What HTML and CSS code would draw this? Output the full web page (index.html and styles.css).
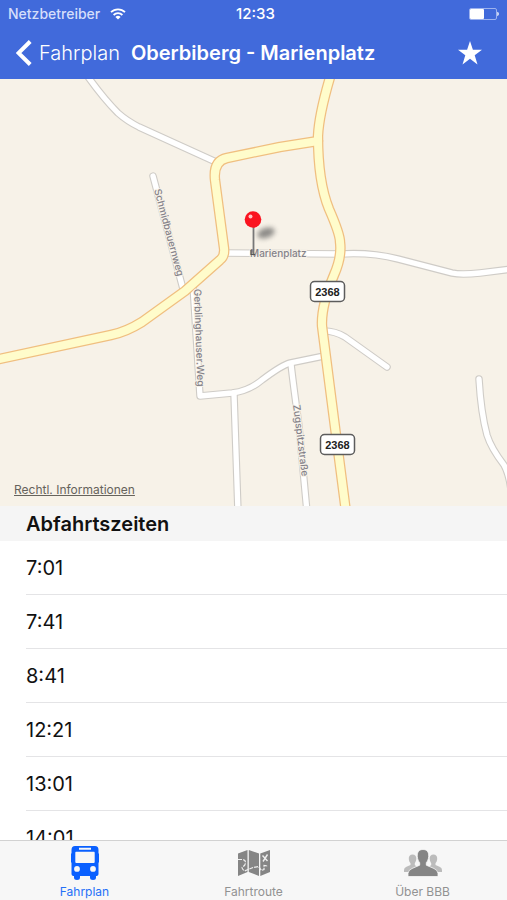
FILE: index.html
```html
<!DOCTYPE html>
<html lang="de">
<head>
<meta charset="utf-8">
<meta name="viewport" content="width=device-width, initial-scale=1">
<title>Oberbiberg - Marienplatz</title>
<link rel="stylesheet" href="styles.css">
</head>
<body>
<header class="header">
  <div class="status">
    <div class="carrier">
      <span>Netzbetreiber</span>
      <svg class="wifi" viewBox="0 0 16 12" aria-hidden="true">
        <g fill="none" stroke="#fff" stroke-width="1.8">
          <path d="M1 4.2a10 10 0 0 1 14 0"/>
          <path d="M3.6 7a6.3 6.3 0 0 1 8.8 0"/>
        </g>
        <path d="M8 11.6L5.4 9a3.7 3.7 0 0 1 5.2 0z" fill="#fff"/>
      </svg>
    </div>
    <span class="clock">12:33</span>
    <svg class="battery" viewBox="0 0 30 14" aria-hidden="true">
      <rect x=".5" y="1.5" width="27" height="11" rx="1.5" fill="none" stroke="#9db2ee"/>
      <rect x="1" y="2" width="14" height="10" rx="1" fill="#fff"/>
      <path d="M28.3 4.8q1.5.6 1.5 2.2t-1.5 2.2z" fill="#fff"/>
    </svg>
  </div>
  <nav class="navbar">
    <a class="back" href="#fahrplan">
      <svg class="chevron" viewBox="0 0 16 26" aria-hidden="true"><path d="M14.2 1.5L2.5 13l11.700 11.500" fill="none" stroke="#fff" stroke-width="4"/></svg>
      <span>Fahrplan</span>
    </a>
    <h1 class="title">Oberbiberg - Marienplatz</h1>
    <button class="favorite" type="button" aria-label="Favorit">
      <svg class="star" viewBox="0 0 24 24" aria-hidden="true"><path d="M12 0l2.900 8.700H24l-7.300 5.500 2.800 9.300L12 17.800l-7.500 5.700 2.800-9.300L0 8.700h9.100z" fill="#fff"/></svg>
    </button>
  </nav>
</header>

<main class="content">
  <section class="map" aria-label="Karte">
    <svg class="map-canvas" viewBox="0 79 507 427" preserveAspectRatio="xMidYMid slice">
      <defs>
        <filter id="soft" x="-50%" y="-50%" width="200%" height="200%"><feGaussianBlur stdDeviation="2.500"/></filter>
        <g id="lanes">
          <path d="M86 74Q103 98 118 113Q127 121 139 127Q176 144 216 162"/>
          <path d="M153 176L183 289"/>
          <path d="M193 285L200 396L232 393Q249 391 262 380Q282 365 290 363L324 356"/>
          <path d="M234 394L238 512"/>
          <path d="M291 364Q293 382 299 426L307 512"/>
          <path d="M225 253L340 254Q371 252 398 259L452 273Q461 275 480 273L512 269"/>
          <path d="M324 331Q335 331 345 337L387 367"/>
          <path d="M479 379Q481 413 487 435Q491 448 504 465Q509 474 511 490"/>
        </g>
        <g id="roads">
          <path d="M-5 360L111 335Q126 332 142 322L185 291L220 260Q225 256 224 248L215 180Q213 161 227 158L280 147L318 141"/>
          <path d="M331 74Q319 114 318 136Q318 182 329 209Q340 234 340 242Q342 257 334 275Q321 306 322 326L332 404L346 512"/>
        </g>
      </defs>
      <rect y="79" width="507" height="427" fill="#f7f2e8"/>
      <g fill="none" stroke-linecap="round" stroke-linejoin="round">
        <use href="#lanes" stroke="#cfccc7" stroke-width="7.500"/>
        <use href="#lanes" stroke="#fff" stroke-width="5.300"/>
        <use href="#roads" stroke="#f0bf80" stroke-width="10.500"/>
        <use href="#roads" stroke="#fffccb" stroke-width="8"/>
      </g>
      <g class="street">
        <text transform="translate(154 190) rotate(75)">Schmidbauernweg</text>
        <text transform="translate(194 289) rotate(88)">Gerblinghauser.Weg</text>
        <text transform="translate(293 405) rotate(83)">Zugspitzstraße</text>
        <text x="250" y="257">Marienplatz</text>
      </g>
      <g class="shield">
        <rect x="310.500" y="281.500" width="34" height="20" rx="4"/>
        <text x="327.500" y="296">2368</text>
        <rect x="320.500" y="434.500" width="34" height="20" rx="4"/>
        <text x="337.500" y="449">2368</text>
      </g>
      <ellipse cx="266" cy="233" rx="9" ry="5" transform="rotate(-18 266 233)" fill="#555" opacity=".65" filter="url(#soft)"/>
      <path d="M253.500 226V254" stroke="#777" stroke-width="1.800"/>
      <path d="M251 250V254.500H255" fill="none" stroke="#555" stroke-width="1.200"/>
      <circle cx="253" cy="219.500" r="8.300" fill="#fa1420"/>
      <circle cx="250.500" cy="216.500" r="2" fill="#ffc4c4"/>
    </svg>
    <a class="legal" href="#rechtliches">Rechtl. Informationen</a>
  </section>

  <section class="departures">
    <h2 class="section-title">Abfahrtszeiten</h2>
    <ul class="times">
      <li>7:01</li>
      <li>7:41</li>
      <li>8:41</li>
      <li>12:21</li>
      <li>13:01</li>
      <li>14:01</li>
    </ul>
  </section>
</main>

<nav class="tabbar">
  <a class="tab tab-active" href="#fahrplan">
    <svg class="tab-icon" viewBox="0 0 40 36" aria-hidden="true">
      <path fill="#0a60ff" fill-rule="evenodd" d="M10 1h20q3.500 0 3.500 4v3.500h.5v9h-.5V29q0 1.500-1.500 2h-1v1.500q0 2.500-3 2.500t-3-2.500V31H15v1.500q0 2.500-3 2.500t-3-2.500V31H8q-1.500-.5-1.500-2V17.500H6v-9h.5V5q0-4 3.500-4zM14 2.800v2h12v-2zM11 6.700q-.7 0-.7 1V17q0 1 1 1h17.400q1 0 1-1V7.700q0-1-.7-1zM12 21a2.900 2.900 0 1 0 0 5.800 2.900 2.900 0 0 0 0-5.800zM28 21a2.900 2.900 0 1 0 0 5.800 2.900 2.900 0 0 0 0-5.800z"/>
    </svg>
    <span>Fahrplan</span>
  </a>
  <a class="tab" href="#fahrtroute">
    <svg class="tab-icon" viewBox="0 0 40 36" aria-hidden="true">
      <path fill="#858585" d="M4 8.500L13.500 5v22L4 31zM14.800 5L25 8.500V31l-10.200-4zM26.300 8.500L36 5v22l-9.700 4z"/>
      <path fill="none" stroke="#eee" stroke-width="1.200" stroke-dasharray="4 1" d="M4 14.500h4q3.500 0 3.500 3t-2.500 4 1.500 4.500l3.500-1.500 5-2 5.500-1 3 4 2.500-1v-4l4 .5"/>
      <path fill="none" stroke="#eee" stroke-width="1.400" d="M28.500 10.500l5 5.500M33.500 9.500l-4.500 7"/>
    </svg>
    <span>Fahrtroute</span>
  </a>
  <a class="tab" href="#ueber">
    <svg class="tab-icon" viewBox="0 0 40 36" aria-hidden="true">
      <g fill="#bcbcbc">
        <path id="side" d="M9.500 9.500c2.600 0 4 1.700 3.800 4.500-.2 2-1 3.500-1.500 4.200v2L17 23v4H1v-2q0-2.500 2.500-3.300L7.500 20v-1.800C6.500 17 6 16 5.800 14c-.2-2.800 1.300-4.500 3.700-4.500z"/>
        <use href="#side" transform="matrix(-1 0 0 1 40 0)"/>
      </g>
      <path fill="#858585" stroke="#f7f7f7" stroke-width=".8" d="M20 4.500c4 0 6 2.800 5.700 7-.2 3-1.400 5-2.400 6.200v2.500L31 23.500q3.800 1.700 4 5V31.500H5v-3q.2-3.300 4-5l7.700-3.300v-2.500c-1-1.200-2.200-3.200-2.400-6.200-.3-4.200 1.700-7 5.700-7z"/>
    </svg>
    <span>Über BBB</span>
  </a>
</nav>
</body>
</html>
```

FILE: styles.css
```css
* {
  box-sizing: border-box;
}

body {
  margin: 0;
  height: 100vh;
  display: flex;
  flex-direction: column;
  overflow: hidden;
  background: #fff;
  color: #111;
  font-family: Inter, "Liberation Sans", sans-serif;
}

a {
  color: inherit;
  text-decoration: none;
}

.header {
  flex: none;
  background: #416adb;
  color: #fff;
}

.status {
  display: grid;
  grid-template-columns: 1fr auto 1fr;
  align-items: center;
  height: 27px;
  padding: 0 8px;
  font-size: 14px;
}

.carrier {
  display: flex;
  align-items: center;
  gap: 10px;
  color: #d5defa;
  font-weight: 500;
}

.wifi {
  width: 16px;
  height: 12px;
}

.clock {
  font-size: 15px;
  font-weight: 500;
  padding-left: 4px;
}

.battery {
  justify-self: end;
  width: 30px;
  height: 14px;
}

.navbar {
  display: flex;
  align-items: center;
  height: 52px;
  padding: 0 25px 0 16px;
  gap: 11px;
}

.back {
  display: flex;
  align-items: center;
  gap: 7px;
  font-size: 20px;
  font-weight: 300;
}

.chevron {
  width: 16px;
  height: 26px;
}

.title {
  flex: 1;
  margin: 0;
  font-size: 20px;
  font-weight: 600;
  white-space: nowrap;
}

.favorite {
  display: flex;
  padding: 0;
  border: 0;
  background: none;
}

.star {
  width: 24px;
  height: 24px;
}

.content {
  flex: 1;
  min-height: 0;
  overflow: hidden;
}

.map {
  position: relative;
}

.map-canvas {
  display: block;
  width: 100%;
  aspect-ratio: 507 / 427;
}

.street {
  font-size: 10px;
  font-weight: 500;
  fill: #85828a;
  stroke: #f7f2e8;
  stroke-width: 2px;
  paint-order: stroke;
}

.shield rect {
  fill: #fff;
  stroke: #5c5c5c;
  stroke-width: 1.5px;
}

.shield text {
  font-family: "Liberation Sans", sans-serif;
  font-size: 11px;
  font-weight: 700;
  fill: #222;
  text-anchor: middle;
}

.legal {
  position: absolute;
  left: 14px;
  bottom: 8px;
  font-size: 12px;
  line-height: 16px;
  color: #66635c;
  text-decoration: underline;
}

.section-title {
  margin: 0;
  padding: 2px 26px 0;
  background: #f5f5f5;
  font-size: 20px;
  font-weight: 600;
  line-height: 33px;
}

.times {
  margin: 0;
  padding: 0 0 0 26px;
  list-style: none;
}

.times li {
  height: 54px;
  border-bottom: 1px solid #e4e4e6;
  font-size: 20px;
  line-height: 54px;
}

.tabbar {
  flex: none;
  display: grid;
  grid-template-columns: repeat(3, 1fr);
  height: 60px;
  border-top: 1px solid #d2d2d2;
  background: #f7f7f7;
}

.tab {
  display: flex;
  flex-direction: column;
  align-items: center;
  padding-top: 4px;
  gap: 3px;
  color: #929292;
  font-size: 12px;
  line-height: 16px;
}

.tab-active {
  color: #2470f8;
}

.tab-icon {
  width: 40px;
  height: 36px;
}
```
